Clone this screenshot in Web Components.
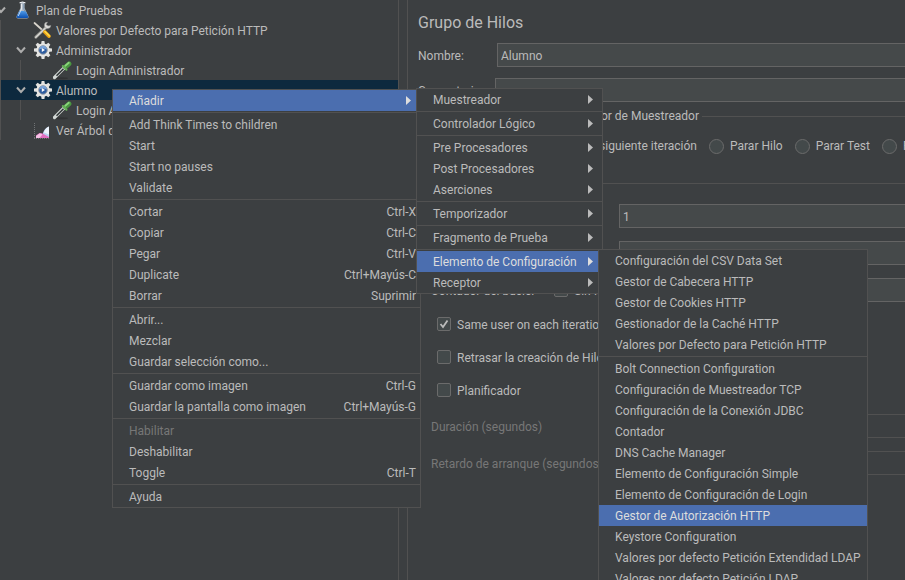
<!DOCTYPE html>
<html lang="es">
<head>
<meta charset="utf-8">
<title>Plan de Pruebas</title>
<style>
  :root {
    --bg: #3c3f41; --line: #515151; --text: #bbbbbb; --muted: #777777;
    --field: #45494a; --field-line: #646464; --accent: #4b6eaf; --row: #0d293e;
  }
  html, body { height: 100%; }
  body { margin: 0; overflow: hidden; background: var(--bg); color: var(--text);
    font: 12px/20px Roboto, "Open Sans", sans-serif; }
</style>
</head>
<body>
<app-shell>
  <tree-item slot="tree" class="root" label="Plan de Pruebas" icon="flask" open>
    <tree-item label="Valores por Defecto para Petición HTTP" icon="tools"></tree-item>
    <tree-item label="Administrador" icon="gear" open>
      <tree-item label="Login Administrador" icon="pipette"></tree-item>
    </tree-item>
    <tree-item label="Alumno" icon="gear" open selected>
      <tree-item label="Login Alumno" icon="pipette"></tree-item>
    </tree-item>
    <tree-item label="Ver Árbol de Resultados" icon="chart"></tree-item>
  </tree-item>

  <thread-group-form></thread-group-form>

  <menu-popup slot="menu" class="context" size="309">
    <menu-entry label="Añadir" active>
      <menu-popup slot="submenu" size="187">
        <menu-entry label="Muestreador" more></menu-entry>
        <menu-line></menu-line>
        <menu-entry label="Controlador Lógico" more></menu-entry>
        <menu-line></menu-line>
        <menu-entry label="Pre Procesadores" more></menu-entry>
        <menu-entry label="Post Procesadores" more></menu-entry>
        <menu-entry label="Aserciones" more></menu-entry>
        <menu-line></menu-line>
        <menu-entry label="Temporizador" more></menu-entry>
        <menu-line></menu-line>
        <menu-entry label="Fragmento de Prueba" more></menu-entry>
        <menu-line></menu-line>
        <menu-entry label="Elemento de Configuración" active>
          <menu-popup slot="submenu" size="270">
            <menu-entry label="Configuración del CSV Data Set"></menu-entry>
            <menu-entry label="Gestor de Cabecera HTTP"></menu-entry>
            <menu-entry label="Gestor de Cookies HTTP"></menu-entry>
            <menu-entry label="Gestionador de la Caché HTTP"></menu-entry>
            <menu-entry label="Valores por Defecto para Petición HTTP"></menu-entry>
            <menu-line></menu-line>
            <menu-entry label="Bolt Connection Configuration"></menu-entry>
            <menu-entry label="Configuración de Muestreador TCP"></menu-entry>
            <menu-entry label="Configuración de la Conexión JDBC"></menu-entry>
            <menu-entry label="Contador"></menu-entry>
            <menu-entry label="DNS Cache Manager"></menu-entry>
            <menu-entry label="Elemento de Configuración Simple"></menu-entry>
            <menu-entry label="Elemento de Configuración de Login"></menu-entry>
            <menu-entry label="Gestor de Autorización HTTP" active></menu-entry>
            <menu-entry label="Keystore Configuration"></menu-entry>
            <menu-entry label="Valores por defecto Petición Extendidad LDAP"></menu-entry>
            <menu-entry label="Valores por defecto Petición LDAP"></menu-entry>
          </menu-popup>
        </menu-entry>
        <menu-entry label="Receptor" more></menu-entry>
      </menu-popup>
    </menu-entry>
    <menu-line></menu-line>
    <menu-entry label="Add Think Times to children"></menu-entry>
    <menu-entry label="Start"></menu-entry>
    <menu-entry label="Start no pauses"></menu-entry>
    <menu-entry label="Validate"></menu-entry>
    <menu-line></menu-line>
    <menu-entry label="Cortar" keys="Ctrl-X"></menu-entry>
    <menu-entry label="Copiar" keys="Ctrl-C"></menu-entry>
    <menu-entry label="Pegar" keys="Ctrl-V"></menu-entry>
    <menu-entry label="Duplicate" keys="Ctrl+Mayús-C"></menu-entry>
    <menu-entry label="Borrar" keys="Suprimir"></menu-entry>
    <menu-line></menu-line>
    <menu-entry label="Abrir..."></menu-entry>
    <menu-entry label="Mezclar"></menu-entry>
    <menu-entry label="Guardar selección como..."></menu-entry>
    <menu-line></menu-line>
    <menu-entry label="Guardar como imagen" keys="Ctrl-G"></menu-entry>
    <menu-entry label="Guardar la pantalla como imagen" keys="Ctrl+Mayús-G"></menu-entry>
    <menu-line></menu-line>
    <menu-entry label="Habilitar" disabled></menu-entry>
    <menu-entry label="Deshabilitar"></menu-entry>
    <menu-entry label="Toggle" keys="Ctrl-T"></menu-entry>
    <menu-line></menu-line>
    <menu-entry label="Ayuda"></menu-entry>
  </menu-popup>
</app-shell>

<script>
const define = (name, render) => customElements.define(name, class extends HTMLElement {
  constructor() { super(); this.attachShadow({ mode: 'open' }); }
  connectedCallback() {
    if (!this.shadowRoot.firstChild) this.shadowRoot.innerHTML = render(this, k => this.getAttribute(k) || '');
  }
});

define('app-shell', () => `
  <style>
    :host { display: grid; grid-template-columns: 398px 10px minmax(0, 1fr); height: 100vh; position: relative; overflow: hidden; }
    nav, main { overflow: hidden; min-width: 0; }
    .splitter { border: solid var(--line); border-width: 0 1px; }
    ::slotted(.root) { margin-left: -19px; }
    ::slotted(.context) { position: absolute; left: 112px; top: 89px; z-index: 5; }
  </style>
  <nav><slot name="tree"></slot></nav>
  <div class="splitter"></div>
  <main><slot></slot></main>
  <slot name="menu"></slot>`);

const teeth = Array.from({ length: 8 }, (_, i) => `<path d="M8 5 8.600 1h2.800L12 5z" transform="rotate(${i * 45} 10 10)"/>`).join('');
const ICONS = {
  flask: `<defs><linearGradient id="a" x2="0" y2="1"><stop stop-color="#4f9be8"/><stop offset="1" stop-color="#0b4fb0"/></linearGradient></defs>
    <path d="M7.500 2h4v6l4 8.500q.4 2-1.500 2H5q-2 0-1.500-2L7.500 8z" fill="#cdd9e6" fill-opacity=".8"/>
    <path d="M6.300 11h6.400l2.600 5.500q.4 1.500-1.300 1.500H5q-1.700 0-1.300-1.500z" fill="url(#a)"/>
    <path d="M6.500 2.800q3-1.600 6 0" stroke="#f4f7fa" fill="none"/><path d="M8.500 4v5l-3.300 7" stroke="#fff" stroke-opacity=".7" fill="none"/>
    <path d="M10.800 4v5l1.400 3" stroke="#7d97b2" fill="none"/>`,
  tools: `<path d="M1.500 3 11 11.500" stroke="#d9d5cc" stroke-width="1.700" stroke-linecap="round"/>
    <path d="M2.800 17.200 14 6.500" stroke="#8d8d89" stroke-width="3" stroke-linecap="round"/>
    <path d="M2.800 17.200 14 6.500" stroke="#d8d8d4" stroke-width="1.500" stroke-linecap="round"/>
    <path d="M17.800 5.500a3.200 3.200 0 1 1-3.300-3.400l-1.300 2.300 1.400 1.700z" fill="#dededb" stroke="#8f8f8c" stroke-width=".5"/>
    <path d="M11.800 12 16 16.200" stroke="#e8a012" stroke-width="3.600" stroke-linecap="round"/>
    <path d="M12 11.500 16.500 16" stroke="#ffd94a" stroke-width="1.600" stroke-linecap="round"/>`,
  gear: `<g fill="#e2e2e0">${teeth}</g>
    <circle cx="10" cy="10" r="6.600" fill="#e6e6e4"/>
    <circle cx="10" cy="10" r="4.300" fill="#2d5c9f" stroke="#9a9fa6"/>
    <path d="M6.200 9.500a3.800 3.800 0 0 1 7.600 0q-3.800-2-7.600 0" fill="#7ba4d8"/>
    <path d="M8.800 8 12 10l-3.200 2z" fill="#fff"/>`,
  pipette: `<ellipse cx="8" cy="18.300" rx="7" ry="1" fill="#222" fill-opacity=".4"/>
    <path d="M1.500 17.500 11 8" stroke="#d2d7d4" stroke-width="3.200" stroke-linecap="round"/>
    <path d="M3.500 15.800 10.500 8.800" stroke="#2b3032" stroke-width="1.500"/>
    <path d="M12.800 6.800 16.200 3.700" stroke="#4a9640" stroke-width="4.600" stroke-linecap="round"/>
    <path d="M12.300 5.800 15.800 2.800" stroke="#8bd47b" stroke-width="1.800" stroke-linecap="round"/>
    <path d="M9.800 6 13.500 9.800" stroke="#66b058" stroke-width="2" stroke-linecap="round"/>`,
  chart: `<path d="M1.500 3v15.500M1 18.500h15" stroke="#707375" stroke-dasharray="1 1"/>
    <path d="M9.500 18v-3q1-6.500 6.500-8.500V18z" fill="#bcd3f2"/>
    <path d="M10.800 12.500q1.500-4.500 5.200-6v8z" fill="#eef4fc"/>
    <path d="M3 18v-2.500l3.500-2.500q2.500 0 4 1L16 17v1z" fill="#e06fc0"/>
    <path d="M3 18v-2l3.500-2.500q2 0 3 1l-3 3.500z" fill="#f5c0e4"/>`
};
define('tree-icon', (el, a) => `
  <style>:host { display: block; width: 20px; height: 20px; } svg { display: block; }</style>
  <svg width="20" height="20" viewBox="0 0 20 20" fill="none" aria-hidden="true">${ICONS[a('name')]}</svg>`);

define('tree-item', (el, a) => `
  <style>
    :host { display: block; }
    .row { display: flex; align-items: center; height: 20px; padding-left: 15px; white-space: nowrap; }
    :host([selected]) .row { background: var(--row); }
    button { all: unset; width: 10px; height: 20px; margin-right: 7px; display: flex; align-items: center; }
    span { margin-left: 3px; line-height: 20px; padding-top: 2px; }
    .spacer { width: 17px; margin: 0; }
    .group { margin-left: 19px; border-left: 1px solid var(--line); }
  </style>
  <div class="row">
    ${el.hasAttribute('open')
      ? `<button aria-label="Contraer ${a('label')}" aria-expanded="true"><svg width="10" height="10" viewBox="0 0 10 10"><path d="M1 2.500 5 7 9 2.500" fill="none" stroke="#adadad" stroke-width="2"/></svg></button>`
      : '<i class="spacer"></i>'}
    <tree-icon name="${a('icon')}"></tree-icon><span>${a('label')}</span>
  </div>
  ${el.hasAttribute('open') ? '<div class="group"><slot></slot></div>' : ''}`);

define('menu-popup', (el, a) => `
  <style>
    :host { display: block; box-sizing: border-box; width: ${a('size')}px; background: var(--bg); border: 1px solid var(--line); }
  </style>
  <div role="menu"><slot></slot></div>`);

define('menu-line', () => `
  <style>:host { display: block; padding: 1px 0; } hr { margin: 0; border: 0; height: 1px; background: var(--line); }</style><hr>`);

define('menu-entry', (el, a) => `
  <style>
    :host { display: block; position: relative; }
    button { display: flex; align-items: center; justify-content: space-between; box-sizing: border-box; width: 100%; height: 21px;
      margin: 0; border: 0; padding: 0 4px 0 16px; background: none; color: inherit; font: inherit; line-height: 21px; white-space: nowrap; text-align: left; }
    button:disabled { color: var(--muted); }
    button.active { background: var(--accent); color: #dddddd; }
    span { padding-top: 2px; }
    svg { margin-right: 5px; }
    ::slotted(menu-popup) { position: absolute; top: -2px; left: calc(100% - 4px); z-index: 1; color: var(--text); }
  </style>
  <button role="menuitem" class="${el.hasAttribute('active') ? 'active' : ''}" ${el.hasAttribute('disabled') ? 'disabled' : ''}>
    <span>${a('label')}</span>
    ${a('keys') ? `<span>${a('keys')}</span>` : ''}
    ${el.hasAttribute('more') || el.querySelector('menu-popup') ? '<svg width="5" height="9" viewBox="0 0 5 9" aria-hidden="true"><path d="M0 0 5 4.500 0 9z" fill="currentColor"/></svg>' : ''}
  </button>
  <slot name="submenu"></slot>`);

define('form-field', (el, a) => `
  <style>
    :host { display: grid; grid-template-columns: var(--label, 188px) minmax(0, 1fr); align-items: center; height: 24px; }
    .head { display: flex; justify-content: space-between; padding-right: 12px; white-space: nowrap; }
    input { box-sizing: border-box; width: 100%; height: 24px; border: 1px solid var(--field-line); border-right: 0; padding: 2px 3px 0;
      background: var(--field); color: inherit; font: inherit; border-radius: 0; }
    label { padding-top: 2px; }
    :host([disabled]) label { color: var(--muted); }
    input:disabled { background: var(--bg); border-color: var(--line); }
  </style>
  <div class="head">${a('label') ? `<label for="f">${a('label')}</label>` : ''}<slot></slot></div>
  <input id="f" type="text" value="${a('value')}" ${a('name') ? `aria-label="${a('name')}"` : ''} ${el.hasAttribute('disabled') ? 'disabled' : ''}>`);

define('check-option', (el, a) => `
  <style>
    :host { display: flex; }
    label { display: flex; align-items: center; gap: 6px; white-space: nowrap; }
    span { padding-top: 2px; }
    input { appearance: none; box-sizing: border-box; flex: none; width: 14px; height: 14px; margin: 0; border: 1px solid #6b6b6b; border-radius: 2px; background: #43494a; }
    input:checked { background: #43494a url("data:image/svg+xml,%3Csvg xmlns='http://www.w3.org/2000/svg' viewBox='0 0 12 12'%3E%3Cpath d='M2.500 6 5 9 9.500 2.500' fill='none' stroke='%23bbbbbb' stroke-width='1.800'/%3E%3C/svg%3E") center / 12px no-repeat; }
  </style>
  <label><input type="checkbox" ${el.hasAttribute('checked') ? 'checked' : ''}><span>${a('label')}</span></label>`);

define('radio-option', (el, a) => `
  <style>
    :host { display: block; flex: none; }
    label { display: flex; align-items: center; gap: 6px; white-space: nowrap; }
    input { appearance: none; box-sizing: border-box; flex: none; width: 15px; height: 15px; margin: 0; border: 1px solid #6b6b6b; border-radius: 50%; background: #43494a; }
  </style>
  <label><input type="radio" name="accion">${a('label')}</label>`);

define('group-box', (el, a) => `
  <style>
    :host { display: block; }
    .title { display: flex; align-items: center; gap: 3px; height: 20px; white-space: nowrap; }
    .title span { min-width: var(--title, 0); text-align: right; }
    .title::after { content: ""; flex: 1; height: 1px; background: var(--line); }
  </style>
  <section aria-label="${a('label') || a('name')}"><div class="title">${a('label') ? `<span>${a('label')}</span>` : ''}</div><slot></slot></section>`);

define('thread-group-form', () => `
  <style>
    :host { display: flex; flex-direction: column; padding: 12px 0 0 10px; }
    h1 { margin: 0 0 9px; font-size: 16px; line-height: 22px; font-weight: 400; }
    .names { display: grid; gap: 11px; margin-bottom: 4px; }
    .name { --label: 79px; } .comment { --label: 77px; }
    .action { --title: 281px; margin-bottom: 17px; }
    .radios { display: flex; align-items: center; gap: 12px; height: 20px; margin-top: 10px; }
    .radios > :first-child { width: 279px; display: flex; justify-content: flex-end; }
    .fields { display: grid; gap: 13px; padding-left: 13px; }
    .fields.first { margin-top: 11px; }
    .checks { display: grid; gap: 9px; margin: 10px 0 12px; padding-left: 19px; }
    .checks check-option { height: 24px; }
  </style>
  <h1>Grupo de Hilos</h1>
  <div class="names">
    <form-field class="name" label="Nombre:" value="Alumno"></form-field>
    <form-field class="comment" label="Comentarios"></form-field>
  </div>
  <group-box class="action" label="Acción a tomar después de error de Muestreador">
    <div class="radios">
      <radio-option label="Comenzar siguiente iteración"></radio-option>
      <radio-option label="Parar Hilo"></radio-option>
      <radio-option label="Parar Test"></radio-option>
      <radio-option label="Parar Test Ahora"></radio-option>
    </div>
  </group-box>
  <group-box name="Propiedades de Hilo">
    <div class="fields first">
      <form-field name="Número de Hilos" value="1"></form-field>
      <form-field name="Periodo de Subida"></form-field>
      <form-field label="Contador del bucle:"><check-option label="Sin fin"></check-option></form-field>
    </div>
    <div class="checks">
      <check-option label="Same user on each iteration" checked></check-option>
      <check-option label="Retrasar la creación de Hilos"></check-option>
      <check-option label="Planificador"></check-option>
    </div>
    <div class="fields">
      <form-field label="Duración (segundos)" disabled></form-field>
      <form-field label="Retardo de arranque (segundos)" disabled></form-field>
    </div>
  </group-box>`);
</script>
</body>
</html>
